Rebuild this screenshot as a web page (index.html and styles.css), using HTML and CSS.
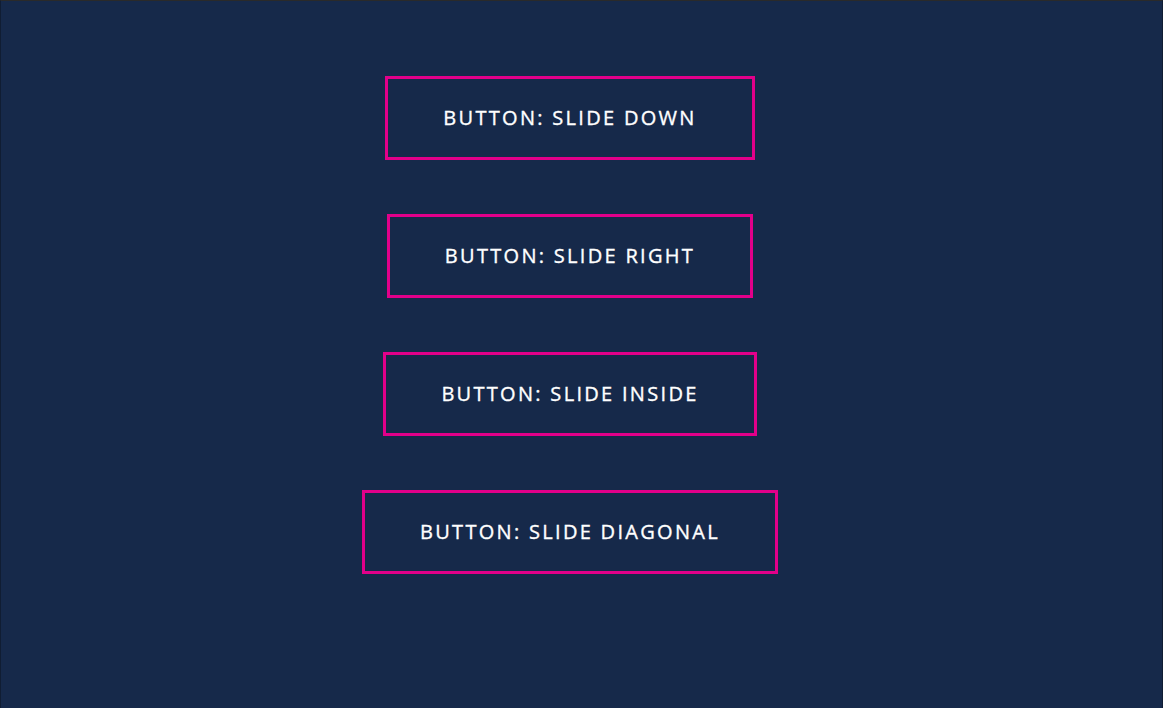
FILE: index.html
```html
<!DOCTYPE html>
<html>
<head>
<meta charset="utf-8">
<link rel="stylesheet" href="styles.css">
</head>
<body>
<div class="frame">
  <div class="stack">
    <a class="btn">Button: Slide Down</a>
    <a class="btn">Button: Slide Right</a>
    <a class="btn">Button: Slide Inside</a>
    <a class="btn">Button: Slide Diagonal</a>
  </div>
</div>
</body>
</html>
```

FILE: styles.css
```css
html, body {
  margin: 0;
  padding: 0;
  height: 100%;
}
body {
  background: #16294a;
  font-family: "Open Sans", "DejaVu Sans", sans-serif;
}
.frame {
  box-sizing: border-box;
  height: 708px;
  border-top: 1px solid #2a2a2a;
  border-left: 1px solid #101d33;
  border-right: 1px solid #101d33;
  padding-top: 75px;
  padding-right: 23px;
}
.stack {
  display: flex;
  flex-direction: column;
  align-items: center;
  gap: 54px;
}
.btn {
  display: block;
  box-sizing: border-box;
  height: 84px;
  line-height: 78px;
  padding: 0 55px;
  border: 3px solid #e2008a;
  color: #ffffff;
  text-transform: uppercase;
  font-size: 20px;
  font-weight: 400;
  -webkit-text-stroke: 0.35px #ffffff;
  letter-spacing: 2.3px;
  text-align: center;
  white-space: nowrap;
}
```
